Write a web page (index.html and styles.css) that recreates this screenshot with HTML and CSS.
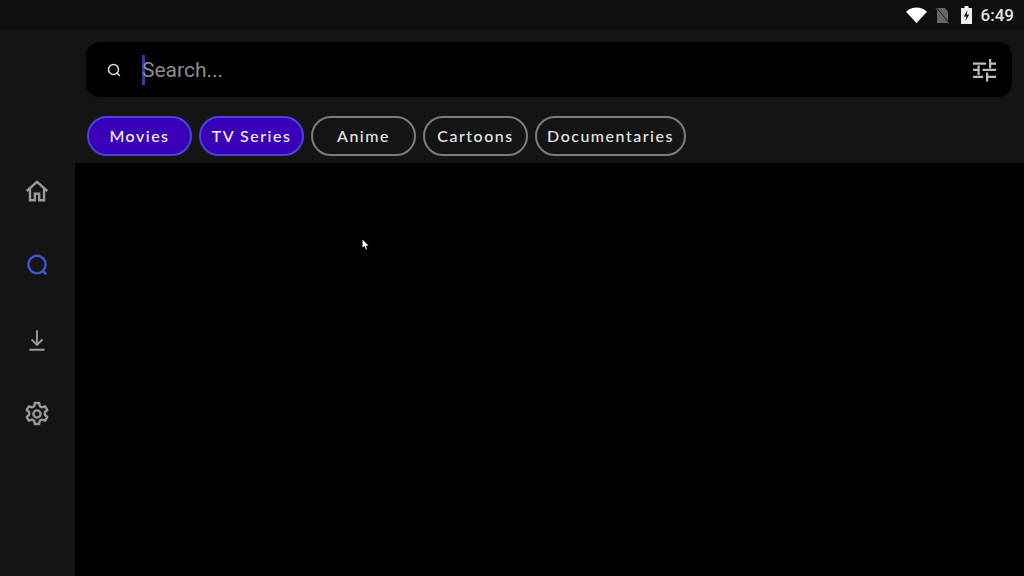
FILE: index.html
```html
<!DOCTYPE html>
<html>
<head>
    <title>Search</title>
    <link rel="stylesheet" href="styles.css">
</head>
<body>
    <div class="status-bar">
        <svg class="wifi" width="21" height="16" viewBox="0 0 20 15"><path d="M0 4.500C3 1.600 6.400 0.400 10 0.400s7 1.200 10 4.100L10 15z" fill="#fff"/></svg>
        <svg class="no-sim" width="15" height="17" viewBox="0 0 15 17"><path d="M2 1h8l3 3.500V16H2z" fill="#666"/><path d="M1 0.500l13 16" stroke="#171717" stroke-width="1.200"/><path d="M1 1.500l12.500 15" stroke="#8a8a8a" stroke-width="0.700"/></svg>
        <svg class="battery" width="11" height="18" viewBox="0 0 11 18"><path d="M3.500 0h4v2H11v16H0V2h3.500z" fill="#eee"/><path d="M6.500 4L2.800 10.500h2.500L4.500 15l3.700-6.500H5.700z" fill="#111"/></svg>
        <span class="clock">6:49</span>
    </div>

    <div class="app">
        <nav class="sidebar">
            <svg class="nav-icon" width="26" height="26" viewBox="0 0 24 24" fill="none" stroke="#9a9a9a" stroke-width="2.200"><path d="M2.500 12L12 3.500 21.500 12M5.500 10v10.500h4.500v-6h4v6h4.500V10"/></svg>
            <svg class="nav-icon" width="26" height="26" viewBox="0 0 24 24" fill="none" stroke="#3d55d6" stroke-width="2.200"><circle cx="12" cy="11.500" r="8"/><path d="M17.500 17.500l2.500 2.500" stroke-linecap="round"/></svg>
            <svg class="nav-icon" width="26" height="26" viewBox="0 0 24 24" fill="none" stroke="#9a9a9a" stroke-width="1.800"><path d="M12 3v13M7 11.500l5 5 5-5M5 21h14"/></svg>
            <svg class="nav-icon" width="26" height="26" viewBox="0 0 24 24" fill="none" stroke="#9a9a9a" stroke-width="2.200" stroke-linejoin="round"><circle cx="12" cy="12" r="3.300"/><path d="M10 1.800h4l.6 3 2 1.100 2.900-1 2 3.400-2.300 2 0 2.400 2.300 2-2 3.400-2.900-1-2 1.100-.6 3h-4l-.6-3-2-1.100-2.900 1-2-3.400 2.300-2 0-2.400-2.300-2 2-3.400 2.900 1 2-1.100z"/></svg>
        </nav>

        <main class="main">
            <header class="top">
                <div class="search-bar">
                    <svg class="search-icon" width="16" height="16" viewBox="0 0 16 16" fill="none" stroke="#ddd" stroke-width="1.500"><circle cx="7.500" cy="7.500" r="5"/><path d="M11 11l2.500 2.500" stroke-linecap="round"/></svg>
                    <span class="caret"></span>
                    <span class="placeholder">Search...</span>
                    <svg class="tune-icon" width="25" height="24" viewBox="0 0 25 24" fill="#bdbdbd"><path d="M1 4.500h13v2.200H1zM17 1h2.200v3.500H24v2.200h-4.800v3.500H17zM1 10.800h4.500V7.500h2.200v9.500H5.500v-4H1zM10.500 10.800H24V13H10.500zM1 17.800h10V20H1zM14 14.500h2.200v3.300H24V20h-7.800v3.500H14z"/></svg>
                </div>
                <div class="chips">
                    <span class="chip active">Movies</span>
                    <span class="chip active">TV Series</span>
                    <span class="chip">Anime</span>
                    <span class="chip">Cartoons</span>
                    <span class="chip wide">Documentaries</span>
                </div>
            </header>
            <section class="results"></section>
        </main>
    </div>

    <svg class="pointer" width="7" height="11" viewBox="0 0 7 11"><path d="M0.500 0.500v8l2-1.500 1.500 3.500 1-.5L3.800 6.800H6.500z" fill="#fff"/></svg>
</body>
</html>
```

FILE: styles.css
```css
html, body {
    height: 100%;
}

body {
    margin: 0;
    background-color: #141414;
    color: #fff;
    font-family: "Roboto", sans-serif;
    overflow: hidden;
    display: flex;
    flex-direction: column;
}

.status-bar {
    height: 30px;
    flex: none;
    background-color: #0f0f0f;
    display: flex;
    align-items: center;
    justify-content: flex-end;
    padding-right: 10px;
}

.wifi {
    margin-right: 8px;
}

.no-sim {
    margin-right: 11px;
}

.battery {
    margin-right: 9px;
}

.clock {
    font-size: 17px;
    font-weight: 500;
    color: #e4e4e4;
}

.app {
    flex: 1;
    display: flex;
    min-height: 0;
}

.sidebar {
    width: 75px;
    flex: none;
    display: flex;
    flex-direction: column;
    align-items: center;
    gap: 48.400px;
    padding: 148px 2px 0 0;
    box-sizing: border-box;
}

.main {
    flex: 1;
    display: flex;
    flex-direction: column;
    min-width: 0;
}

.top {
    padding: 12px 12px 7px 11px;
}

.search-bar {
    height: 55px;
    background-color: #000;
    border-radius: 14px;
    display: flex;
    align-items: center;
    padding: 0 15px 0 20px;
}

.caret {
    width: 3px;
    height: 30px;
    background-color: #2c3f9c;
    margin-left: 20px;
    margin-right: -3px;
}

.placeholder {
    flex: 1;
    font-size: 21px;
    color: #8c8c8c;
}

.chips {
    display: flex;
    gap: 7px;
    margin: 19px 0 0 1px;
}

.chip {
    width: 105px;
    height: 40px;
    box-sizing: border-box;
    border: 2px solid #7c7c7c;
    border-radius: 20px;
    padding-bottom: 2px;
    display: flex;
    align-items: center;
    justify-content: center;
    font-family: "Lato", sans-serif;
    font-size: 16px;
    font-weight: 500;
    letter-spacing: 1.500px;
    color: #e6e6e6;
}

.chip.active {
    background-color: #3a00b8;
    border-color: #4a44e0;
    color: #f2f0ff;
}

.chip.wide {
    width: 151px;
}

.results {
    flex: 1;
    background-color: #000;
}

.pointer {
    position: absolute;
    left: 362px;
    top: 239px;
}
```
